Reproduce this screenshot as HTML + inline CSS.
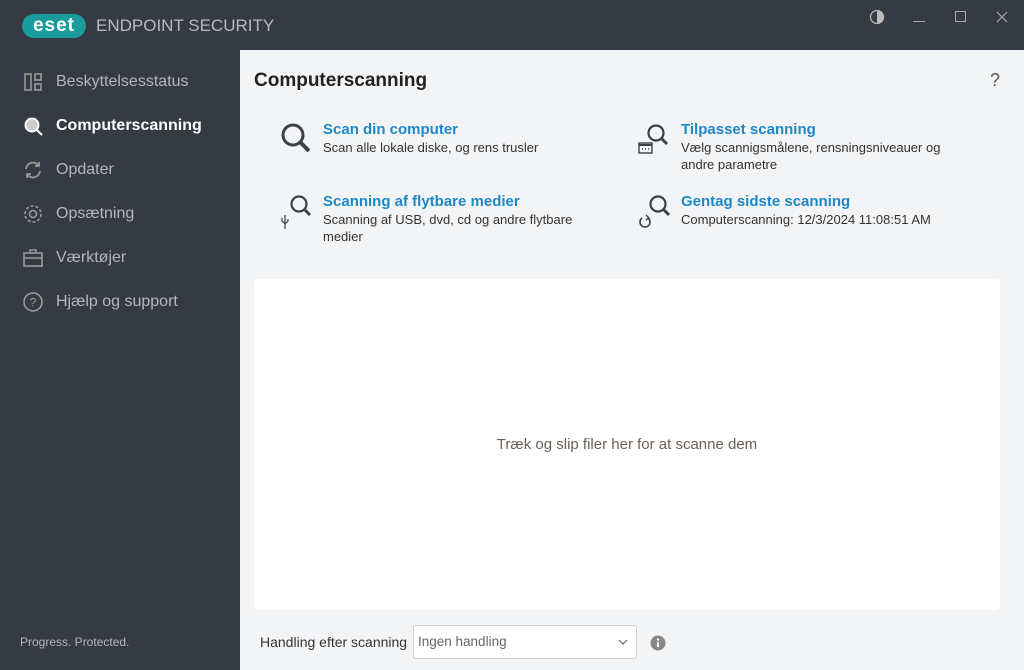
<!DOCTYPE html>
<html><head><meta charset="utf-8"><style>
*{margin:0;padding:0;box-sizing:border-box}
body{width:1024px;height:670px;overflow:hidden;background:#363a42;font-family:"Liberation Sans",sans-serif;position:relative}
.side{position:absolute;left:0;top:50px;width:240px;height:620px;background:#363a42}
.nav{position:absolute;left:22px;height:24px;display:flex;align-items:center;color:#b4b6ba;font-size:16px}
.nav svg{width:22px;height:22px;margin-right:12px}
.nav.act{color:#fff;font-weight:bold}
.main{position:absolute;left:240px;top:50px;width:784px;height:620px;background:#f3f4f6}
h1{position:absolute;left:14px;top:20px;font-size:19px;color:#222;font-weight:bold}
.item{position:absolute}
.item .t{color:#1e88c6;font-size:15px;font-weight:bold;line-height:18px}
.item .d{color:#333;font-size:13px;line-height:17px}
.ic{position:absolute}
.panel{position:absolute;left:14px;top:229px;width:746px;height:331px;background:#fff;border-radius:4px}
</style></head><body>
<div style="position:absolute;left:22px;top:14px;width:64px;height:24px;background:#1a9b9c;border-radius:12px;color:#fff;font-weight:bold;font-size:19px;line-height:24px;text-align:center;letter-spacing:1px">eset</div>
<div style="position:absolute;left:96px;top:16px;color:#b8babe;font-size:17px">ENDPOINT SECURITY</div>
<svg style="position:absolute;left:868px;top:9px" width="18" height="16"><circle cx="9" cy="8" r="6.5" fill="none" stroke="#bbb" stroke-width="1.3"/><path d="M9 1.5a6.5 6.5 0 0 1 0 13z" fill="#bbb"/></svg>
<div style="position:absolute;left:913px;top:21px;width:12px;height:1px;background:#aaa"></div>
<div style="position:absolute;left:955px;top:11px;width:11px;height:11px;border:1px solid #aaa"></div>
<svg style="position:absolute;left:996px;top:11px" width="12" height="12"><path d="M1 1L11 11M11 1L1 11" stroke="#aaa" stroke-width="1.2"/></svg>
<div class="side">
<div class="nav" style="top:20px"><svg viewBox="0 0 22 22" fill="none" stroke="#999" stroke-width="1.6"><rect x="3" y="3" width="6" height="16"/><rect x="13" y="3" width="6" height="6"/><rect x="13" y="13" width="6" height="6"/></svg>Beskyttelsesstatus</div>
<div class="nav act" style="top:64px"><svg viewBox="0 0 22 22" fill="none" stroke="#fff" stroke-width="2"><circle cx="10" cy="10" r="6.5" fill="#ccc"/><path d="M15 15l5 5"/></svg>Computerscanning</div>
<div class="nav" style="top:108px"><svg viewBox="0 0 22 22" fill="none" stroke="#999" stroke-width="1.8"><path d="M4 10a7 7 0 0 1 13-3M18 12a7 7 0 0 1-13 3"/><path d="M17 3v4h-4M5 19v-4h4"/></svg>Opdater</div>
<div class="nav" style="top:152px"><svg viewBox="0 0 22 22" fill="none" stroke="#999" stroke-width="1.6"><circle cx="11" cy="11" r="3.5"/><circle cx="11" cy="11" r="8" stroke-dasharray="3 2"/></svg>Opsætning</div>
<div class="nav" style="top:196px"><svg viewBox="0 0 22 22" fill="none" stroke="#999" stroke-width="1.6"><rect x="2" y="6" width="18" height="13"/><path d="M8 6V3h6v3M2 11h18"/></svg>Værktøjer</div>
<div class="nav" style="top:240px"><svg viewBox="0 0 22 22" fill="none" stroke="#999" stroke-width="1.6"><circle cx="11" cy="11" r="9"/><text x="11" y="15.5" font-size="12" fill="#999" stroke="none" text-anchor="middle" font-family="Liberation Sans">?</text></svg>Hjælp og support</div>
<div style="position:absolute;left:20px;top:585px;color:#b4b6ba;font-size:12px">Progress. Protected.</div>
</div>
<div class="main">
<h1>Computerscanning</h1>
<div style="position:absolute;left:750px;top:20px;font-size:18px;color:#555">?</div>
<svg class="ic" style="left:40px;top:72px" width="34" height="34" fill="none" stroke="#3c4148" stroke-width="3"><circle cx="13" cy="13" r="10"/><path d="M20 20l9 9" stroke-width="4"/></svg>
<div class="item" style="left:83px;top:71px"><div class="t">Scan din computer</div><div class="d">Scan alle lokale diske, og rens trusler</div></div>
<svg class="ic" style="left:397px;top:72px" width="34" height="34" fill="none" stroke="#3c4148" stroke-width="2.2"><circle cx="19" cy="11" r="7.5"/><path d="M25 17l5 5" stroke-width="3"/><rect x="2" y="21" width="13" height="10" stroke-width="1.4"/><path d="M2 23h13" stroke-width="2"/><path d="M5 27h1M8 27h1M11 27h1" stroke-width="1.4"/></svg>
<div class="item" style="left:441px;top:71px"><div class="t">Tilpasset scanning</div><div class="d">Vælg scannigsmålene, rensningsniveauer og<br>andre parametre</div></div>
<svg class="ic" style="left:38px;top:143px" width="36" height="36" fill="none" stroke="#3c4148" stroke-width="2.2"><circle cx="21" cy="11" r="7.5"/><path d="M27 17l5 5" stroke-width="3"/><path d="M7 22v14M4 25v3l3 3M10 26v2l-3 3" stroke-width="1.2"/></svg>
<div class="item" style="left:83px;top:143px"><div class="t">Scanning af flytbare medier</div><div class="d">Scanning af USB, dvd, cd og andre flytbare<br>medier</div></div>
<svg class="ic" style="left:397px;top:143px" width="36" height="36" fill="none" stroke="#3c4148" stroke-width="2.2"><circle cx="21" cy="11" r="7.5"/><path d="M27 17l5 5" stroke-width="3"/><path d="M11 25a5 5 0 1 1-6 0" stroke-width="1.6"/><path d="M9 22l3 3-3 2" stroke-width="1.4"/></svg>
<div class="item" style="left:441px;top:143px"><div class="t">Gentag sidste scanning</div><div class="d">Computerscanning: 12/3/2024 11:08:51 AM</div></div>
<div class="panel"><div style="position:absolute;top:157px;width:100%;text-align:center;color:#6a6056;font-size:15px">Træk og slip filer her for at scanne dem</div></div>
<div style="position:absolute;left:20px;top:584px;font-size:14px;color:#333">Handling efter scanning</div>
<div style="position:absolute;left:173px;top:575px;width:224px;height:34px;background:#fff;border:1px solid #ccc;border-radius:3px;font-size:13.5px;color:#666;padding:8px 4px">Ingen handling
<svg style="position:absolute;right:8px;top:13px" width="10" height="6"><path d="M1 1l4 4 4-4" fill="none" stroke="#666" stroke-width="1.2"/></svg></div>
<svg style="position:absolute;left:410px;top:585px" width="16" height="16"><circle cx="8" cy="8" r="7.5" fill="#888"/><rect x="7" y="7" width="2" height="5" fill="#fff"/><circle cx="8" cy="4.6" r="1.2" fill="#fff"/></svg>
</div>
</body></html>
